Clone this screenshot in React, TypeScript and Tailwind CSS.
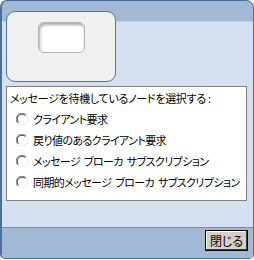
import React from "react";

const options = [
  "クライアント要求",
  "戻り値のあるクライアント要求",
  "メッセージ ブローカ サブスクリプション",
  "同期的メッセージ ブローカ サブスクリプション",
];

function Radio() {
  return (
    <svg width="12" height="12" viewBox="0 0 12 12" className="shrink-0">
      <circle cx="6" cy="6" r="5.5" fill="#ffffff" />
      <path d="M1.8 10.2 A5.5 5.5 0 0 1 10.2 1.8" fill="none" stroke="#808080" strokeWidth="1" />
      <path d="M2.6 9.4 A4.5 4.5 0 0 1 9.4 2.6" fill="none" stroke="#404040" strokeWidth="1" />
      <path d="M10.2 1.8 A5.5 5.5 0 0 1 1.8 10.2" fill="none" stroke="#e6e6e6" strokeWidth="1" />
    </svg>
  );
}

export default function App() {
  return (
    <div className="w-[254px] h-[260px] bg-white font-['Noto_Sans_CJK_JP','Liberation_Sans',sans-serif] text-[11px] text-black [font-feature-settings:'palt']">
      <div className="w-[254px] h-[259px] flex flex-col border border-l-2 border-[#4b6e9a] rounded-tl-[7px] rounded-tr-[8px] rounded-b-[5px] overflow-hidden bg-[linear-gradient(to_bottom,#a2b9d6_0,#a2b9d6_20px,#c2d1e7_20px,#c2d1e7_21px,#d6e0f0_21px)]">
        <div className="pt-[10px] pl-[4px]">
          <div className="w-[110px] h-[71px] rounded-[9px] border border-[#4f76a6] bg-[#f0f0f0] flex justify-center pt-[10px]">
            <div className="w-[47px] h-[31px] rounded-[6px] bg-white border border-[#b4b4b4] shadow-[inset_1px_2px_3px_rgba(0,0,0,0.35)]" />
          </div>
        </div>
        <div className="mt-[4px] ml-[4px] w-[241px] h-[115px] border border-[#808080] bg-white pl-[3px] pt-[3px] whitespace-nowrap">
          <div className="leading-[16px] tracking-[-0.3px]">メッセージを待機しているノードを選択する :</div>
          <div className="flex flex-col gap-[5px] mt-[5px] pl-[6px]">
            {options.map((o) => (
              <div key={o} className="flex items-center gap-[5px] h-[16px] leading-[16px] tracking-[-0.6px] [word-spacing:2px]">
                <Radio />
                <span>{o}</span>
              </div>
            ))}
          </div>
        </div>
        <div className="flex-1" />
        <div className="h-[31px] border-t border-[#6f8fb8] bg-[#a2b9d6] flex justify-end items-start pt-[2px] pr-[5px]">
          <button className="w-[43px] h-[21px] bg-[#d4d0c8] border border-black shadow-[inset_-1px_-1px_0_#404040,inset_1px_1px_0_#ffffff] leading-[18px] text-[12px]">
            閉じる
          </button>
        </div>
      </div>
    </div>
  );
}
